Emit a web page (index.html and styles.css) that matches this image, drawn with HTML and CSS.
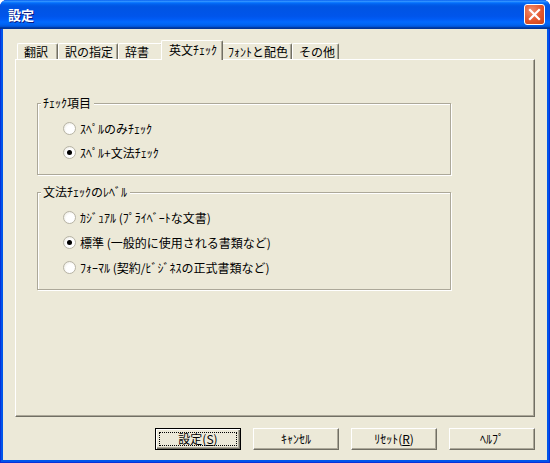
FILE: index.html
```html
<!DOCTYPE html>
<html lang="ja">
<head>
<meta charset="utf-8">
<title>設定</title>
<link rel="stylesheet" href="styles.css">
</head>
<body>
<div class="window">
  <div class="titlebar">
    <span class="title">設定</span>
    <span class="close">
      <svg width="13" height="13" viewBox="0 0 13 13"><path d="M2 2 L11 11 M11 2 L2 11" stroke="#fff" stroke-width="2.2" stroke-linecap="square" fill="none"/></svg>
    </span>
  </div>
  <div class="client">
    <div class="tabs">
      <div class="tab tab-a">翻訳</div>
      <div class="tab tab-b">訳の指定</div>
      <div class="tab tab-c">辞書</div>
      <div class="tab tab-d active">英文ﾁｪｯｸ</div>
      <div class="tab tab-e">ﾌｫﾝﾄと配色</div>
      <div class="tab tab-f">その他</div>
    </div>
    <div class="panel">
      <fieldset class="group group-check">
        <legend>ﾁｪｯｸ項目</legend>
        <div class="options">
          <div class="radio"><span class="circle"></span><span>ｽﾍﾟﾙのみﾁｪｯｸ</span></div>
          <div class="radio"><span class="circle checked"></span><span>ｽﾍﾟﾙ+文法ﾁｪｯｸ</span></div>
        </div>
      </fieldset>
      <fieldset class="group group-level">
        <legend>文法ﾁｪｯｸのﾚﾍﾞﾙ</legend>
        <div class="options options-wide">
          <div class="radio"><span class="circle"></span><span>ｶｼﾞｭｱﾙ (ﾌﾟﾗｲﾍﾞｰﾄな文書)</span></div>
          <div class="radio"><span class="circle checked"></span><span>標準 (一般的に使用される書類など)</span></div>
          <div class="radio"><span class="circle"></span><span>ﾌｫｰﾏﾙ (契約/ﾋﾞｼﾞﾈｽの正式書類など)</span></div>
        </div>
      </fieldset>
    </div>
    <div class="buttons">
      <div class="btn default"><span class="focus">設定(<u>S</u>)</span></div>
      <div class="btn">ｷｬﾝｾﾙ</div>
      <div class="btn">ﾘｾｯﾄ(<u>R</u>)</div>
      <div class="btn">ﾍﾙﾌﾟ</div>
    </div>
  </div>
</div>
</body>
</html>
```

FILE: styles.css
```css
* { box-sizing: border-box; }
html, body { margin: 0; padding: 0; }
body {
  width: 550px;
  height: 463px;
  overflow: hidden;
  background: #ffffff;
  font-family: "Noto Sans CJK JP", "Noto Sans", sans-serif;
  font-size: 12px;
  color: #000;
}
.window {
  width: 550px;
  height: 463px;
  display: flex;
  flex-direction: column;
  background: #0055ea;
  border-radius: 7px 7px 0 0;
  overflow: hidden;
  box-shadow: inset 1px 0 0 #0831d9, inset -1px 0 0 #0831d9, inset 0 -1px 0 #0831d9;
}
.titlebar {
  height: 29px;
  flex: none;
  display: flex;
  align-items: center;
  justify-content: space-between;
  padding: 0 5px 0 8px;
  background: linear-gradient(to bottom, #0058ee 0%, #3593ff 4%, #288eff 6%, #127dff 8%, #036ffc 10%, #0262ee 14%, #0057e5 20%, #0054e3 24%, #0055eb 56%, #005bf5 66%, #026afe 76%, #0062ef 86%, #0052d6 92%, #0040ab 94%, #003092 100%);
}
.title {
  color: #fff;
  font-weight: bold;
  font-size: 13px;
  line-height: 15px;
  text-shadow: 1px 1px 0 #0a1883;
  letter-spacing: 0;
}
.close {
  width: 21px;
  height: 21px;
  border: 1px solid #fff;
  border-radius: 3px;
  background: radial-gradient(circle at 35% 30%, #f08e6f 0%, #e3562d 55%, #cb4216 100%);
  display: flex;
  align-items: center;
  justify-content: center;
}
.client {
  flex: 1;
  margin: 0 3px 3px;
  background: #ece9d8;
  display: flex;
  flex-direction: column;
  padding: 11px 12px 0;
}
.tabs {
  height: 19px;
  display: flex;
  align-items: flex-end;
  padding-left: 2px;
  position: relative;
  z-index: 1;
}
.tab {
  height: 16px;
  line-height: 15px;
  padding-left: 6px;
  white-space: nowrap;
  background: #ece9d8;
  border-top: 1px solid #fff;
  border-left: 1px solid #fff;
  border-right: 1px solid #716f64;
  border-radius: 2px 2px 0 0;
  box-shadow: inset -1px 0 0 #aca899;
}
.tab-a { width: 41px; }
.tab-b { width: 60px; }
.tab-c { width: 45px; }
.tab-d { width: 62px; }
.tab-e { width: 71px; }
.tab-f { width: 47px; }
.tab.active {
  height: 20px;
  margin: 0 -2px -1px;
  padding-left: 7px;
  line-height: 17px;
  position: relative;
  z-index: 2;
}
.panel {
  width: 520px;
  height: 358px;
  background: #ece9d8;
  border-top: 1px solid #fff;
  border-left: 1px solid #fff;
  border-right: 1px solid #716f64;
  border-bottom: 1px solid #716f64;
  box-shadow: inset -1px -1px 0 #aca899;
  padding: 37px 0 0 21px;
  display: flex;
  flex-direction: column;
}
.group {
  width: 414px;
  margin: 0;
  padding: 0;
  border: 1px solid #aca899;
  box-shadow: 1px 1px 0 #fff, inset 1px 1px 0 #fff;
  min-inline-size: 0;
}
.group legend {
  margin-left: 3px;
  padding: 0 3px 0 2px;
  line-height: 12px;
  height: 12px;
  background: #ece9d8;
  white-space: nowrap;
}
.group-level { margin-top: 11px; }
.options {
  display: flex;
  flex-direction: column;
  gap: 8px;
  padding: 11px 0 14px 25px;
}
.options-wide { gap: 9px; }
.radio {
  height: 16px;
  display: flex;
  align-items: center;
  gap: 4px;
  white-space: nowrap;
}
.circle {
  width: 13px;
  height: 13px;
  flex: none;
  border-radius: 50%;
  border: 1px solid #b7b4a6;
  background: radial-gradient(circle at 60% 60%, #ffffff 0%, #ffffff 45%, #e4e1d4 100%);
  display: flex;
  align-items: center;
  justify-content: center;
}
.circle.checked::after {
  content: "";
  width: 5px;
  height: 5px;
  border-radius: 50%;
  background: #000;
}
.buttons {
  margin-top: 11px;
  display: flex;
  justify-content: flex-end;
  gap: 12px;
}
.btn {
  width: 86px;
  height: 22px;
  display: flex;
  align-items: center;
  justify-content: center;
  background: #ece9d8;
  border: 1px solid;
  border-color: #fff #716f64 #716f64 #fff;
  box-shadow: inset -1px -1px 0 #aca899;
  line-height: 14px;
  white-space: nowrap;
}
.btn.default {
  border: 1px solid #000;
  box-shadow: inset 1px 1px 0 #fff, inset -1px -1px 0 #716f64, inset -2px -2px 0 #aca899;
  padding: 3px;
}
.focus {
  width: 100%;
  height: 100%;
  display: flex;
  align-items: center;
  justify-content: center;
  border: 1px dotted #000;
}
u { text-decoration: underline; text-underline-offset: 1px; }
```
